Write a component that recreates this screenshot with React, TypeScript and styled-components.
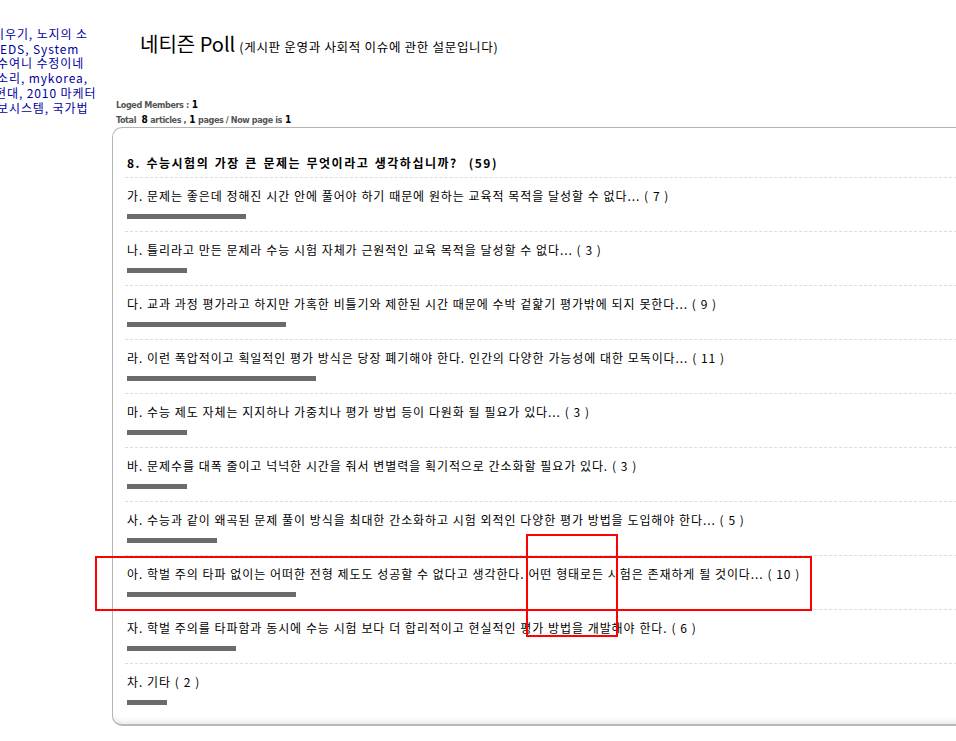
import React from 'react';
import styled, { createGlobalStyle } from 'styled-components';

const GlobalStyle = createGlobalStyle`
  html, body { margin: 0; padding: 0; background: #fff; overflow: hidden; }
  body { font-family: "Noto Sans CJK KR", "Noto Sans", sans-serif; color: #000; }
`;

const KR = `"Noto Sans CJK KR", "Noto Sans", sans-serif`;

const Page = styled.div`
  display: flex;
  width: 1100px;
  height: 741px;
`;

const Sidebar = styled.div`
  flex: none;
  width: 112px;
  padding-top: 27px;
  overflow: hidden;
`;

const Tag = styled.div<{ $shift: number }>`
  margin-left: ${p => p.$shift}px;
  font-family: ${KR};
  font-size: 12px;
  line-height: 14.7px;
  letter-spacing: 0.9px;
  color: #0000a0;
  white-space: nowrap;
`;

const Main = styled.div`
  flex: none;
  display: flex;
  flex-direction: column;
  width: 900px;
`;

const Heading = styled.h1`
  margin: 32px 0 0 28px;
  height: 24px;
  font-family: ${KR};
  font-size: 20px;
  line-height: 24px;
  font-weight: normal;
  white-space: nowrap;
`;

const HeadingNote = styled.span`
  font-size: 12.5px;
  letter-spacing: 0.7px;
  margin-left: 4px;
`;

const Meta = styled.div`
  margin: 0 0 0 4px;
  padding-top: 42px;
`;

const MetaLine = styled.div`
  height: 14.5px;
  font-family: "DejaVu Sans Condensed", "Liberation Sans Narrow", "Liberation Sans", sans-serif;
  font-size: 9px;
  font-weight: bold;
  line-height: 14.5px;
  color: #555;
  letter-spacing: -0.4px;
  white-space: nowrap;
`;

const MetaNum = styled.b`
  color: #000;
  font-size: 10px;
  line-height: 0;
  margin: 0 3px;
`;

const Box = styled.div`
  border: 1px solid #b4b4b4;
  border-right: none;
  border-bottom: 2px solid #b8b8b8;
  border-radius: 10px 0 0 10px;
  box-shadow: inset 0 -6px 6px -4px rgba(0, 0, 0, 0.1);
  padding: 0 0 19px 12px;
`;

const Question = styled.div`
  padding: 27px 0 6px 2px;
  border-bottom: 1px dashed #dcdcdc;
  font-family: ${KR};
  font-size: 12px;
  line-height: 16px;
  font-weight: bold;
  letter-spacing: 1.5px;
  word-spacing: 1.3px;
  white-space: pre;
`;

const Item = styled.div<{ $last?: boolean }>`
  padding: 10px 0 ${p => (p.$last ? 0 : 12)}px 2px;
  border-bottom: ${p => (p.$last ? 'none' : '1px dashed #dcdcdc')};
`;

const Answer = styled.div`
  height: 16px;
  font-family: ${KR};
  font-size: 12px;
  line-height: 16px;
  letter-spacing: 0.9px;
  word-spacing: 0.3px;
  white-space: nowrap;
`;

const Bar = styled.div`
  margin-top: 10px;
  height: 5px;
  background: #6b6b6b;
`;

const Mark = styled.div`
  position: absolute;
  border: 2px solid #f00;
  pointer-events: none;
`;

const tags: [string, number][] = [
  ['비우기, 노지의 소', -7],
  ['EDS, System', 0],
  ['수여니 수정이네', -3],
  ['소리, mykorea,', -3],
  ['현대, 2010 마케터', -5],
  ['보시스템, 국가법', -3],
];

const answers: [string, number, number][] = [
  ['가. 문제는 좋은데 정해진 시간 안에 풀어야 하기 때문에 원하는 교육적 목적을 달성할 수 없다...', 7, 119],
  ['나. 틀리라고 만든 문제라 수능 시험 자체가 근원적인 교육 목적을 달성할 수 없다...', 3, 60],
  ['다. 교과 과정 평가라고 하지만 가혹한 비틀기와 제한된 시간 때문에 수박 겉핥기 평가밖에 되지 못한다...', 9, 159],
  ['라. 이런 폭압적이고 획일적인 평가 방식은 당장 폐기해야 한다. 인간의 다양한 가능성에 대한 모독이다...', 11, 189],
  ['마. 수능 제도 자체는 지지하나 가중치나 평가 방법 등이 다원화 될 필요가 있다...', 3, 60],
  ['바. 문제수를 대폭 줄이고 넉넉한 시간을 줘서 변별력을 획기적으로 간소화할 필요가 있다.', 3, 60],
  ['사. 수능과 같이 왜곡된 문제 풀이 방식을 최대한 간소화하고 시험 외적인 다양한 평가 방법을 도입해야 한다...', 5, 90],
  ['아. 학벌 주의 타파 없이는 어떠한 전형 제도도 성공할 수 없다고 생각한다. 어떤 형태로든 시험은 존재하게 될 것이다...', 10, 169],
  ['자. 학벌 주의를 타파함과 동시에 수능 시험 보다 더 합리적이고 현실적인 평가 방법을 개발해야 한다.', 6, 109],
  ['차. 기타', 2, 40],
];

export default function App() {
  return (
    <>
      <GlobalStyle />
      <Page>
        <Sidebar>
          {tags.map(([t, s]) => (
            <Tag key={t} $shift={s}>{t}</Tag>
          ))}
        </Sidebar>
        <Main>
          <Heading>
            네티즌 Poll<HeadingNote>(게시판 운영과 사회적 이슈에 관한 설문입니다)</HeadingNote>
          </Heading>
          <Meta>
            <MetaLine>
              Loged Members :<MetaNum>1</MetaNum>
            </MetaLine>
            <MetaLine>
              Total <MetaNum>8</MetaNum>articles ,<MetaNum>1</MetaNum>pages / Now page is<MetaNum>1</MetaNum>
            </MetaLine>
          </Meta>
          <Box>
            <Question>{'8. 수능시험의 가장 큰 문제는 무엇이라고 생각하십니까?  (59)'}</Question>
            {answers.map(([text, count, width], i) => (
              <Item key={text} $last={i === answers.length - 1}>
                <Answer>{text} ( {count} )</Answer>
                <Bar style={{ width }} />
              </Item>
            ))}
          </Box>
        </Main>
      </Page>
      <Mark style={{ left: 95, top: 556, width: 713, height: 51 }} />
      <Mark style={{ left: 526, top: 534, width: 88, height: 99 }} />
    </>
  );
}
